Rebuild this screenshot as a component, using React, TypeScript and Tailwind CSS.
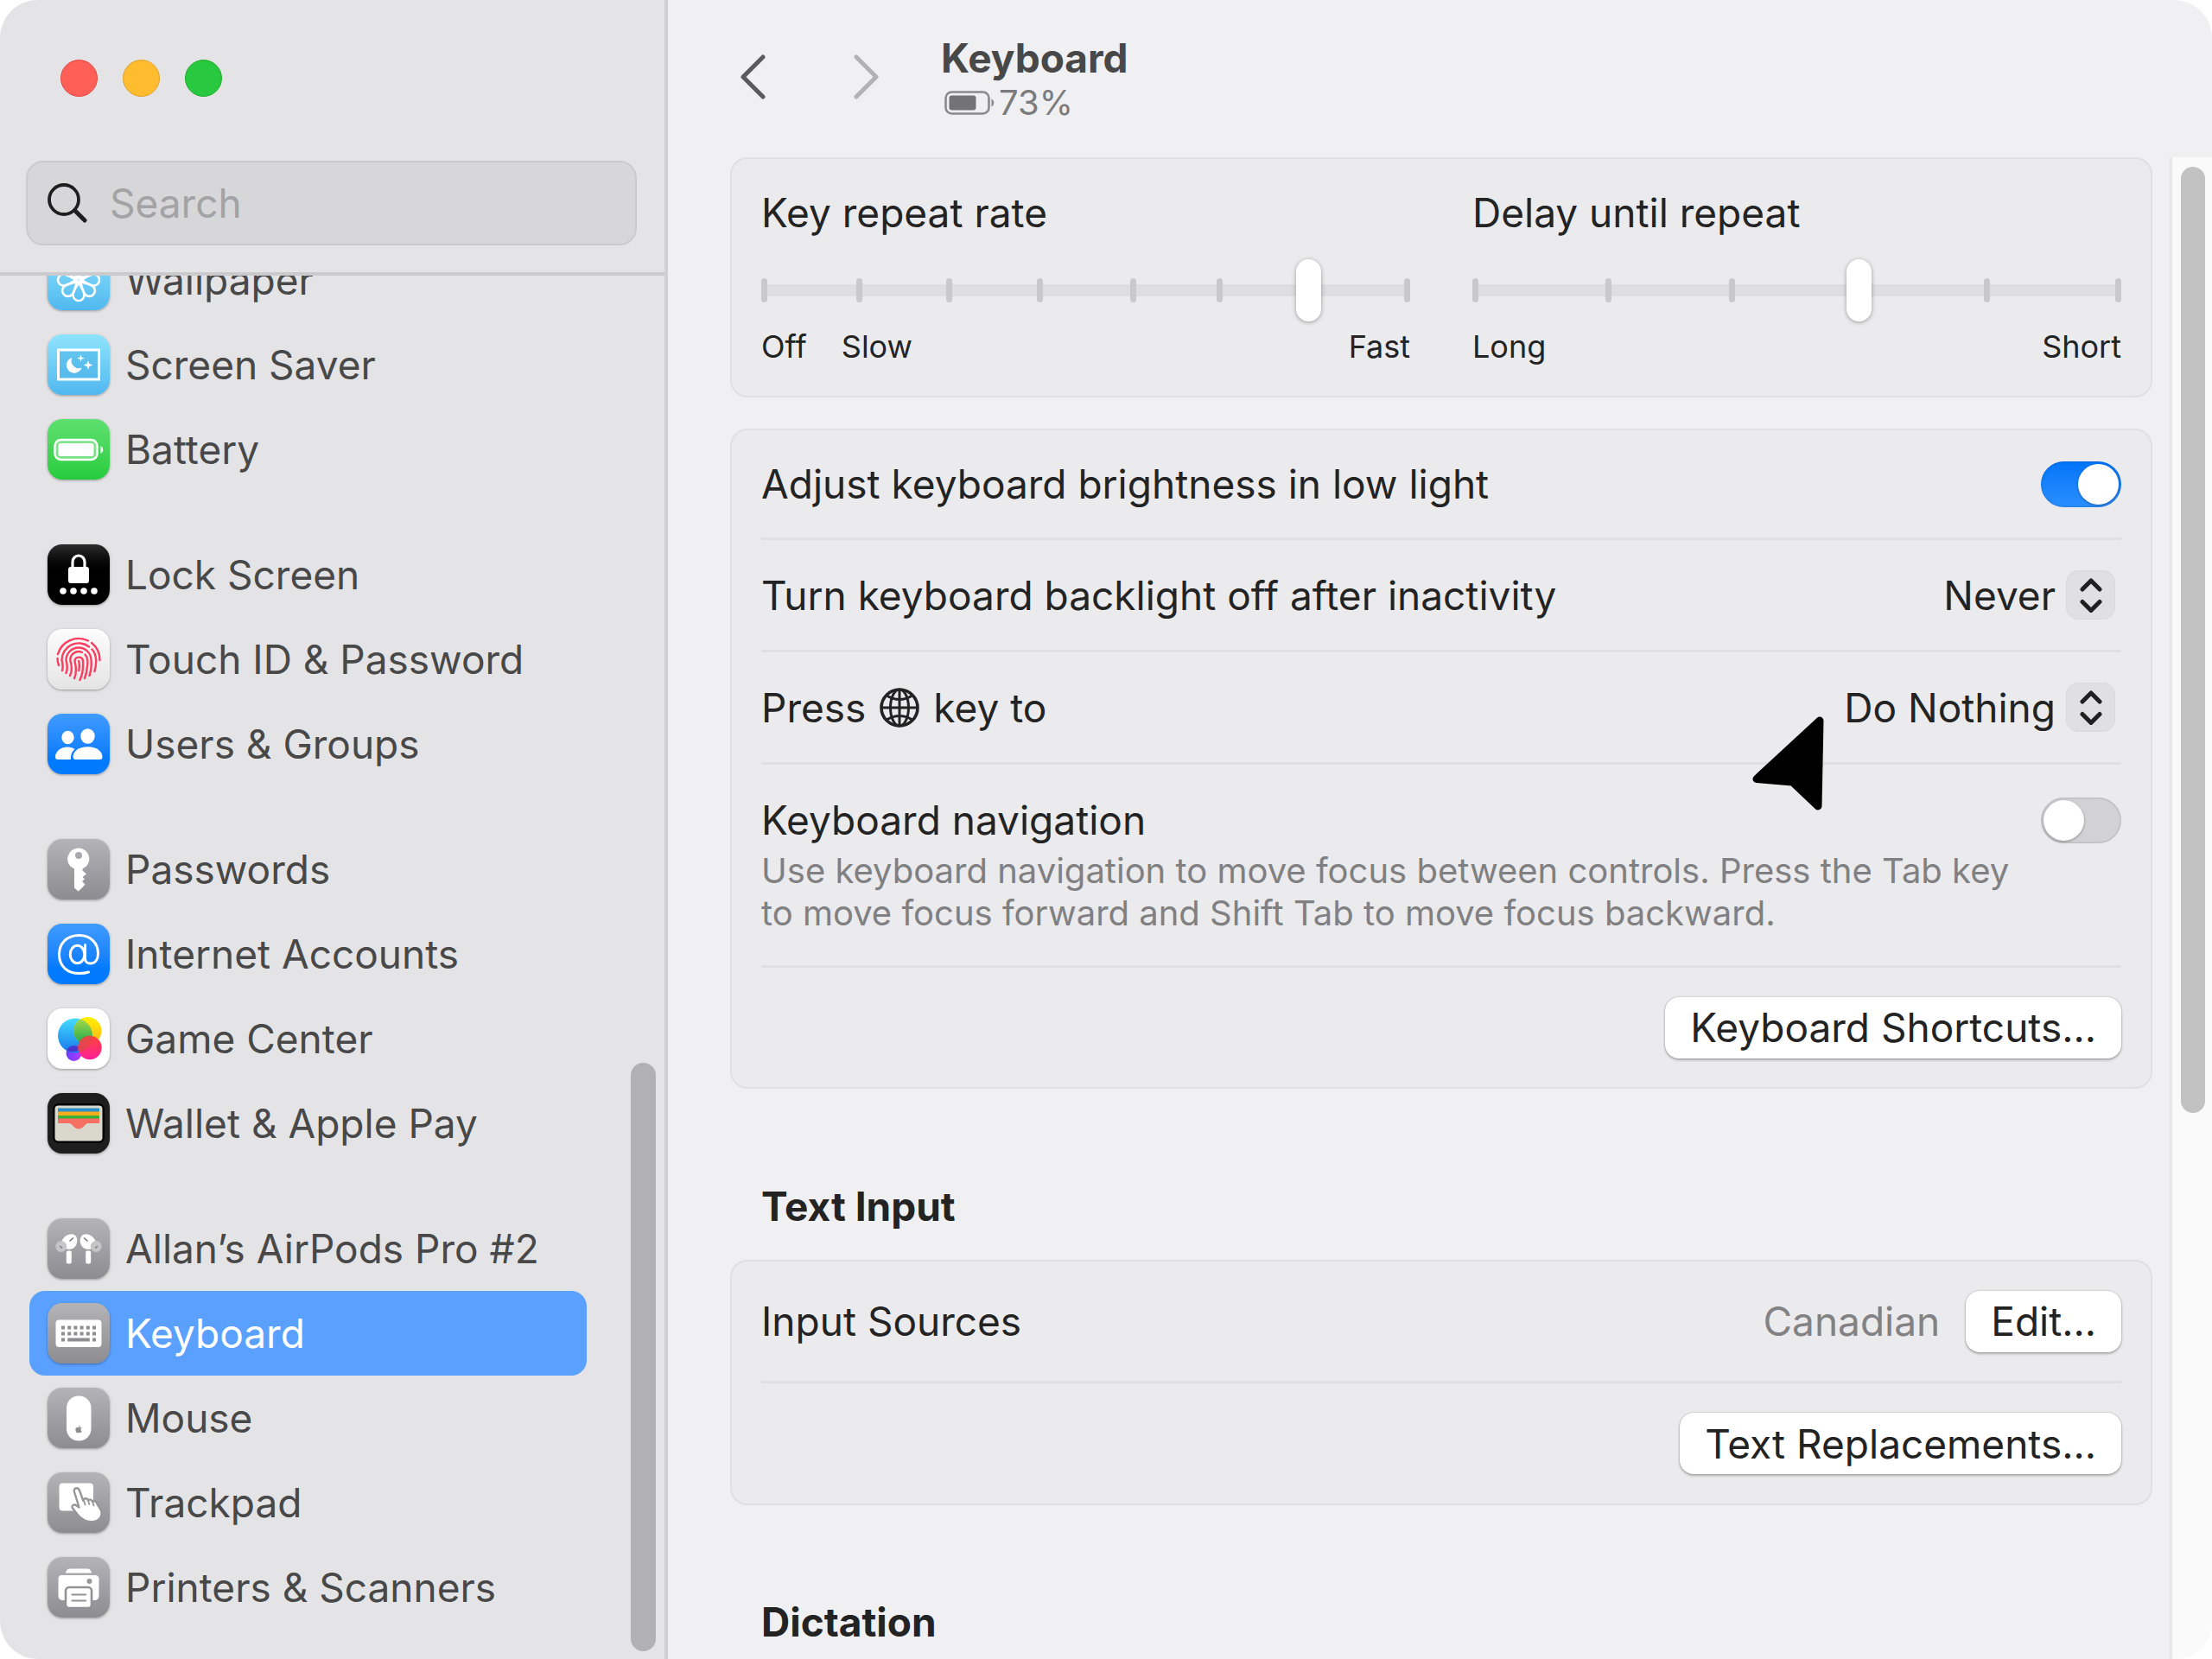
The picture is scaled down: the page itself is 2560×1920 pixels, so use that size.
import type { ReactNode } from "react";
import { FaApple } from "react-icons/fa";

const SKY = "bg-linear-to-b from-[#8ee4fd] to-[#4fb8ef]";
const GREEN = "bg-linear-to-b from-[#5ee070] to-[#24cc3c]";
const BLACK = "bg-linear-to-b from-[#2c2c2c] to-[#000000] to-55%";
const PAPER = "bg-linear-to-b from-[#fdfdfd] to-[#e4e4e4]";
const BLUE = "bg-linear-to-b from-[#3f9bff] to-[#007aff] to-75%";
const GRAY = "bg-linear-to-b from-[#b4b4b8] to-[#8c8c91]";

const WallpaperIcon = () => (
  <g fill="none" stroke="#fff" strokeWidth="2.6">
    {[0, 45, 90, 135, 180, 225, 270, 315].map((a) => (
      <path key={a} transform={`rotate(${a} 36 35)`} d="M36 38 C33 44 29.500 47 29.500 52.500 A6.500 6.500 0 0 0 42.500 52.500 C42.500 47 39 44 36 38Z" />
    ))}
    <circle cx="36" cy="35" r="4.500" />
  </g>
);

const ScreenSaverIcon = () => (
  <g>
    <rect x="12.500" y="18" width="47" height="34" fill="#4db2e6" fillOpacity=".55" stroke="#fff" strokeWidth="3" />
    <path d="M28.500 27 A9 9 0 1 0 39.500 38.500 A8.500 8.500 0 0 1 28.500 27Z" fill="#fff" />
    <path d="M38.500 23 L39.500 26.500 L43 27.500 L39.500 28.500 L38.500 32 L37.500 28.500 L34 27.500 L37.500 26.500Z M47 30 L48.300 34 L52.500 35.500 L48.300 37 L47 41 L45.700 37 L41.500 35.500 L45.700 34Z" fill="#fff" />
  </g>
);

const BatteryIcon = () => (
  <g>
    <rect x="8.500" y="24" width="49" height="23" rx="7" fill="#fff" fillOpacity=".3" stroke="#fff" strokeWidth="2.500" />
    <rect x="12.500" y="28" width="41" height="15" rx="2.500" fill="#fff" />
    <path d="M61.500 31 A5 5 0 0 1 61.500 40Z" fill="#fff" />
  </g>
);

const LockIcon = () => (
  <g fill="#fff">
    <path d="M29 28 V20.500 A7 7.500 0 0 1 43 20.500 V28" fill="none" stroke="#fff" strokeWidth="3.200" />
    <rect x="24" y="26" width="24" height="19" rx="3" />
    {[18, 30, 42, 54].map((x) => <circle key={x} cx={x} cy="54" r="3.800" />)}
  </g>
);

const TouchIcon = () => (
  <g fill="none" stroke="#fb3d60" strokeWidth="2.400" strokeLinecap="round">
    <path d="M12 29 A25 25 0 0 1 47 13.500" />
    <path d="M51 16 A25 25 0 0 1 60.500 36" />
    <path d="M11.500 34 Q11.500 38 13 42" />
    <path d="M17 48 Q18.500 43 16.500 36 A19.500 19.500 0 0 1 48 20.500" />
    <path d="M51.500 23.500 Q59 32 54.500 49" />
    <path d="M21.500 51 Q24 45 21.500 36 A14.500 14.500 0 0 1 50.500 36 Q51.500 46 48.500 54" />
    <path d="M26 54 Q29.500 47 26.500 37 A9.500 9.500 0 0 1 40 27" />
    <path d="M43.500 29.500 Q47.500 34 46 43 Q45.500 51 43 57" />
    <path d="M31 57 Q34.500 50 31.500 37 A4.800 4.800 0 0 1 41 36.500 Q42 49 37.500 59" />
    <path d="M36.300 37 Q37.500 43 36.300 48" />
  </g>
);

const UsersIcon = () => (
  <g fill="#fff">
    <ellipse cx="23.500" cy="27.500" rx="7.200" ry="7.700" />
    <ellipse cx="46.500" cy="26" rx="8.200" ry="8.800" />
    <path d="M9 50 C9 44 15 38.500 23 38.500 C27 38.500 29.500 39.500 31.500 41 C28 44 26.500 48 27 53 H12 Q9 53 9 50Z" />
    <path d="M29.500 50 C29.500 44 36 38.300 46.500 38.300 C57 38.300 63.500 44 63.500 50 Q63.500 53 60.500 53 H32.500 Q29.500 53 29.500 50Z" />
  </g>
);

const KeyIcon = () => (
  <path
    fill="#fff"
    fillRule="evenodd"
    d="M36 10.500 A12.500 12.500 0 0 0 31 34.600 V56.500 L35.500 60.500 L39 57.500 L43.500 52.500 L40 49 L43 46.500 L40.500 44 L45 40.500 L40.500 36.500 V34.600 A12.500 12.500 0 0 0 36 10.500Z M36 15 A4 4 0 1 1 36 23 A4 4 0 1 1 36 15Z"
  />
);

const AtIcon = () => (
  <g fill="none" stroke="#fff" strokeWidth="3" strokeLinecap="round">
    <ellipse cx="34.500" cy="35.500" rx="8.300" ry="10.300" />
    <path d="M43.500 24.500 V40.500 C43.500 44 46 46 49.500 46 C55.500 46 58.500 41 58.500 34.500 C58.500 22 49.500 13.500 36.500 13.500 C22.500 13.500 13.500 22.500 13.500 35.500 C13.500 49 22.500 57.500 37 57.500 C41 57.500 44.500 57 47.500 56" />
  </g>
);

const GameIcon = () => (
  <g>
    <defs>
      <linearGradient id="gc-blue" x1="0" y1="0" x2="0" y2="1"><stop offset="0" stopColor="#45dcff" /><stop offset="1" stopColor="#1577ea" /></linearGradient>
      <linearGradient id="gc-yellow" x1="0" y1="0" x2="0" y2="1"><stop offset="0" stopColor="#fff100" /><stop offset="1" stopColor="#ffb21c" /></linearGradient>
      <linearGradient id="gc-green" x1="0" y1="0" x2="0" y2="1"><stop offset="0" stopColor="#b2dc4a" /><stop offset="1" stopColor="#17a74e" /></linearGradient>
      <linearGradient id="gc-red" x1="0" y1="0" x2="0" y2="1"><stop offset="0" stopColor="#ff4436" /><stop offset="1" stopColor="#ff1f9c" /></linearGradient>
      <linearGradient id="gc-purple" x1="0" y1="0" x2="1" y2="0"><stop offset="0" stopColor="#6a3dff" /><stop offset="1" stopColor="#b53cff" /></linearGradient>
      <clipPath id="gc-clip"><circle cx="32" cy="31.500" r="20" /></clipPath>
    </defs>
    <circle cx="30.500" cy="52" r="9" fill="url(#gc-purple)" />
    <circle cx="32" cy="31.500" r="20" fill="url(#gc-blue)" />
    <path d="M22 49 A9 9 0 0 1 38 47.500 A20 20 0 0 1 22 49Z" fill="#4a35cf" />
    <circle cx="46.500" cy="26" r="16" fill="url(#gc-yellow)" />
    <circle cx="46.500" cy="26" r="16" fill="url(#gc-green)" clipPath="url(#gc-clip)" />
    <circle cx="49" cy="45.500" r="13.700" fill="url(#gc-red)" />
    <circle cx="49" cy="45.500" r="13.700" fill="#dd4a4a" fillOpacity=".75" clipPath="url(#gc-clip)" />
  </g>
);

const WalletIcon = () => (
  <g>
    <rect x="6" y="12" width="60" height="46" rx="7" fill="#000" />
    <rect x="8.500" y="14.500" width="55" height="41" rx="4" fill="#dad7cd" />
    <path d="M12 17.500 H60 V22 H12Z" fill="#2a92c9" />
    <path d="M12 21.500 H60 V26 H12Z" fill="#f8ae1c" />
    <path d="M12 26 H60 V30 H12Z" fill="#3bb136" />
    <path d="M12 29.500 H60 V35 H47 C43 35 42 41.500 36 41.500 C30 41.500 29 35 25 35 H12Z" fill="#f56f62" />
  </g>
);

const Pod = () => (
  <g>
    <path d="M16 28 C18 20 26 16.500 31 19 C36 22 35 31 30 34.500 C27 36.500 21 36.500 18 33Z" fill="#fff" />
    <rect x="21.800" y="37.500" width="6" height="15" rx="1.800" fill="#fff" />
    <circle cx="15.800" cy="32.500" r="6.500" fill="#c6c6c8" />
    <path d="M14 32 L17 34.500" stroke="#8f8f93" strokeWidth="2" />
    <path d="M25.500 26.500 L30 22.500" stroke="#77777b" strokeWidth="1.500" />
  </g>
);

const AirPodsIcon = () => (
  <g>
    <Pod />
    <g transform="translate(72 0) scale(-1 1)"><Pod /></g>
  </g>
);

const KeyboardIcon = () => (
  <g>
    <rect x="9.500" y="19.500" width="53" height="31.500" rx="4" fill="#fff" />
    <g fill="#8e8e92">
      {[16, 23.200, 30.400, 37.600, 44.800, 52].map((x) => (
        <g key={x}>
          <rect x={x} y="26.500" width="4" height="4" />
          <rect x={x} y="33.500" width="4" height="4" />
        </g>
      ))}
      <rect x="16" y="40.500" width="4" height="4" />
      <rect x="23.200" y="40.500" width="25.600" height="4" />
      <rect x="52" y="40.500" width="4" height="4" />
    </g>
  </g>
);

const MouseIcon = () => (
  <g>
    <rect x="22" y="9.500" width="28.500" height="52" rx="14" fill="#fff" />
    <FaApple x="31" y="43" size={10} color="#8e8e92" />
  </g>
);

const TrackpadIcon = () => (
  <g>
    <rect x="13.500" y="12.500" width="39.500" height="32" rx="4" fill="#fff" />
    <path
      d="M31 22.500 C29.500 18.500 35 16.500 36.800 20.500 L41.500 33 C42 29.500 46 29.500 46.800 32.500 C48.500 30.500 51.500 31.500 52 34 C54 32.500 56.500 33.500 57.500 36.500 L61.500 43 C64.500 49 61 56 53.500 57 C45 58 39.500 55 34.500 48.500 L29 41.500 C27 38.500 31 36 33.500 38.500 L36.500 40.500Z"
      fill="#fff"
      stroke="#97979b"
      strokeWidth="2.400"
      strokeLinejoin="round"
    />
    <path d="M42.200 33 L43.500 37.500 M47.200 33 L48.300 37 M52.500 35 L53.500 38.500" stroke="#97979b" strokeWidth="1.800" strokeLinecap="round" />
  </g>
);

const PrinterIcon = () => (
  <g>
    <path d="M21 18.500 Q22 13.500 26 13.500 H46 Q50 13.500 51 18.500Z" fill="#fff" />
    <path d="M16.500 21 H55 Q59.500 21 59.500 25.500 V45 Q59.500 50 54 50 H18 Q12.500 50 12.500 45 V25.500 Q12.500 21 16.500 21Z" fill="#fff" />
    <circle cx="48.500" cy="28" r="3" fill="#97979b" />
    <rect x="21" y="35" width="30" height="24" rx="4" fill="#fff" stroke="#929296" strokeWidth="2.600" />
    <path d="M28.500 43.500 H44 M28.500 50.500 H44" stroke="#929296" strokeWidth="2.200" strokeLinecap="round" />
  </g>
);

type Item = { label: string; tile: string; Icon: () => ReactNode; current?: boolean };

const groups: Item[][] = [
  [
    { label: "Wallpaper", tile: SKY, Icon: WallpaperIcon },
    { label: "Screen Saver", tile: SKY, Icon: ScreenSaverIcon },
    { label: "Battery", tile: GREEN, Icon: BatteryIcon },
  ],
  [
    { label: "Lock Screen", tile: BLACK, Icon: LockIcon },
    { label: "Touch ID & Password", tile: PAPER, Icon: TouchIcon },
    { label: "Users & Groups", tile: BLUE, Icon: UsersIcon },
  ],
  [
    { label: "Passwords", tile: GRAY, Icon: KeyIcon },
    { label: "Internet Accounts", tile: BLUE, Icon: AtIcon },
    { label: "Game Center", tile: "bg-white", Icon: GameIcon },
    { label: "Wallet & Apple Pay", tile: "bg-[#1e1e1e]", Icon: WalletIcon },
  ],
  [
    { label: "Allan’s AirPods Pro #2", tile: GRAY, Icon: AirPodsIcon },
    { label: "Keyboard", tile: GRAY, Icon: KeyboardIcon, current: true },
    { label: "Mouse", tile: GRAY, Icon: MouseIcon },
    { label: "Trackpad", tile: GRAY, Icon: TrackpadIcon },
    { label: "Printers & Scanners", tile: GRAY, Icon: PrinterIcon },
  ],
];

function SidebarItem({ label, tile, Icon, current }: Item) {
  return (
    <li>
      <a
        href="#"
        aria-current={current ? "page" : undefined}
        className={`flex h-[98px] items-center gap-[18px] rounded-[18px] pl-[21px] ${current ? "bg-[#5aa1ff] text-white" : "text-[#484849]"}`}
      >
        <span className={`h-[70px] w-[72px] shrink-0 overflow-hidden rounded-[17px] shadow-[0_1px_3px_rgba(0,0,0,0.35)] ${tile}`}>
          <svg viewBox="0 0 72 70" className="h-full w-full" aria-hidden="true"><Icon /></svg>
        </span>
        <span className="whitespace-nowrap">{label}</span>
      </a>
    </li>
  );
}

function Sidebar() {
  return (
    <aside className="flex w-[773px] shrink-0 flex-col border-r-4 border-[#d0d0d2] bg-[#e4e4e6]">
      <div className="border-b-4 border-[#cbcbcd] pb-[31px] pl-[30px] pr-8">
        <div className="flex gap-[29px] pb-[74px] pl-10 pt-[69px]">
          <button aria-label="Close" className="size-[43px] rounded-full border border-[#e2463f] bg-[#ff5f57]" />
          <button aria-label="Minimize" className="size-[43px] rounded-full border border-[#e0a028] bg-[#febc2e]" />
          <button aria-label="Zoom" className="size-[43px] rounded-full border border-[#1dad2b] bg-[#28c840]" />
        </div>
        <label className="flex h-[98px] items-center gap-[26px] rounded-[20px] border-2 border-[#cbcbcd] bg-[#d7d7d9] pl-[23px]">
          <svg viewBox="0 0 46 46" className="size-[46px] shrink-0" fill="none" stroke="#1f1f1f" strokeLinecap="round" aria-hidden="true">
            <circle cx="19" cy="19" r="17" strokeWidth="3.800" />
            <path d="M31.500 31.500 L43 43" strokeWidth="5" />
          </svg>
          <input type="search" aria-label="Search" placeholder="Search" className="w-full min-w-0 bg-transparent outline-none placeholder:text-[#a3a3a5]" />
        </label>
      </div>
      <div className="flex min-h-0 flex-1">
        <nav className="min-w-0 flex-1 overflow-hidden pl-[34px]">
          <div className="-mt-11 flex flex-col gap-[47px]">
            {groups.map((g, i) => (
              <ul key={i}>{g.map((it) => <SidebarItem key={it.label} {...it} />)}</ul>
            ))}
          </div>
        </nav>
        <div className="flex w-[90px] flex-col justify-end pb-[9px] pl-[51px]">
          <div className="h-[42.8%] w-[29px] rounded-full bg-[#b1b1b4]" />
        </div>
      </div>
    </aside>
  );
}

function Panel({ children }: { children: ReactNode }) {
  return <section className="rounded-[20px] border-2 border-[#e0e0e2] bg-[#ebebed] px-[34px]">{children}</section>;
}

type SliderProps = { id: string; label: string; max: number; value: number; ticks: number[]; children: ReactNode };

function Slider({ id, label, max, value, ticks, children }: SliderProps) {
  return (
    <div className="min-w-0 flex-1">
      <label htmlFor={id}>{label}</label>
      <div className="relative mt-[26px] flex h-[72px] items-center">
        <div className="h-[14px] w-full rounded-xs bg-[#dedee0]" />
        {ticks.map((t) => (
          <span key={t} className="absolute h-7 w-[7px] rounded-full bg-[#c9c9cb]" style={{ left: `${t}%` }} />
        ))}
        <input
          id={id}
          type="range"
          min={0}
          max={max}
          defaultValue={value}
          className="absolute inset-0 h-full w-full appearance-none bg-transparent [&::-webkit-slider-thumb]:h-[72px] [&::-webkit-slider-thumb]:w-[29px] [&::-webkit-slider-thumb]:appearance-none [&::-webkit-slider-thumb]:rounded-full [&::-webkit-slider-thumb]:bg-white [&::-webkit-slider-thumb]:shadow-[0_1px_5px_rgba(0,0,0,0.35)]"
        />
      </div>
      <div className="mt-[5px] flex text-[36px] leading-[48px]">{children}</div>
    </div>
  );
}

function Toggle({ id, on }: { id: string; on?: boolean }) {
  return (
    <span className="relative flex h-[53px] w-[93px] shrink-0">
      <input
        id={id}
        type="checkbox"
        role="switch"
        defaultChecked={on}
        className="peer h-full w-full appearance-none rounded-full bg-[#d2d2d4] shadow-[inset_0_0_3px_rgba(0,0,0,0.25)] checked:bg-linear-to-b checked:from-[#0074f8] checked:to-[#2a90ff]"
      />
      <span className="pointer-events-none absolute left-[3px] top-[3px] size-[47px] rounded-full bg-white shadow-[0_1px_3px_rgba(0,0,0,0.35)] peer-checked:left-auto peer-checked:right-[3px]" />
    </span>
  );
}

function Picker({ id, options }: { id: string; options: string[] }) {
  return (
    <span className="relative mr-[7px] flex items-center">
      <select id={id} className="appearance-none bg-transparent pr-[69px] text-right outline-none [field-sizing:content]">
        {options.map((o) => <option key={o}>{o}</option>)}
      </select>
      <span className="pointer-events-none absolute right-0 flex size-[57px] items-center justify-center rounded-[14px] border border-[#d9d9db] bg-[#e0e0e2]">
        <svg viewBox="0 0 26 40" className="h-10 w-[26px]" fill="none" stroke="#202020" strokeWidth="5" strokeLinecap="round" strokeLinejoin="round" aria-hidden="true">
          <path d="M3 13 L13 3 L23 13 M3 27.500 L13 37.500 L23 27.500" />
        </svg>
      </span>
    </span>
  );
}

function PushButton({ children }: { children: ReactNode }) {
  return (
    <button className="h-[71px] whitespace-nowrap rounded-[16px] bg-white px-[29px] shadow-[0_0_2px_rgba(0,0,0,0.3),0_2px_3px_rgba(0,0,0,0.25)]">
      {children}
    </button>
  );
}

const rowLine = "border-b-3 border-[#e0e0e2]";

const Globe = () => (
  <svg viewBox="0 0 46 46" className="size-[46px]" fill="none" stroke="#232323" strokeWidth="3" aria-hidden="true">
    <circle cx="23" cy="23" r="21" strokeWidth="3.600" />
    <ellipse cx="23" cy="23" rx="10.500" ry="21" />
    <path d="M23 2 V44 M2 23 H44 M8 9 Q23 18 38 9 M8 37 Q23 28 38 37" />
  </svg>
);

export default function App() {
  return (
    <div className="bg-white">
      <div className="relative flex h-screen min-w-0 overflow-hidden rounded-[44px] bg-[#f0f0f2] font-['Inter','Liberation_Sans',sans-serif] text-[46px] leading-[56px] text-[#232323]">
        <Sidebar />
        <main className="flex min-w-0 flex-1 flex-col">
          <header className="flex h-[182px] shrink-0 items-start pl-[83px]">
            <button aria-label="Back" className="mt-[63px]">
              <svg viewBox="0 0 32 52" className="h-[52px] w-8" fill="none" stroke="#5a5a5c" strokeWidth="5" strokeLinecap="round" strokeLinejoin="round"><path d="M27 3 L4 26 L27 49" /></svg>
            </button>
            <button aria-label="Forward" className="ml-[98px] mt-[63px]">
              <svg viewBox="0 0 32 52" className="h-[52px] w-8" fill="none" stroke="#b2b2b4" strokeWidth="5" strokeLinecap="round" strokeLinejoin="round"><path d="M5 3 L28 26 L5 49" /></svg>
            </button>
            <div className="ml-[71px] pt-[39px]">
              <h1 className="font-bold text-[#484849]">Keyboard</h1>
              <p className="flex items-center gap-[3px] pl-1 text-[40px] leading-[48px] text-[#7b7b7d]">
                <svg viewBox="0 0 60 28" className="h-7 w-[60px]" aria-hidden="true">
                  <rect x="1.500" y="1.500" width="50" height="25" rx="7" fill="none" stroke="#8a8a8c" strokeWidth="2.600" />
                  <rect x="5.500" y="5.500" width="31" height="17" rx="3" fill="#737375" />
                  <path d="M54.500 9.500 A5 5 0 0 1 54.500 18.500Z" fill="#8a8a8c" />
                </svg>
                73%
              </p>
            </div>
          </header>
          <div className="flex min-h-0 flex-1">
            <div className="min-w-0 flex-1 overflow-hidden pl-[72px] pr-5">
              <Panel>
                <div className="flex gap-[72px] pb-[33px] pt-[34px]">
                  <Slider id="rate" label="Key repeat rate" max={7} value={6} ticks={[0, 14.700, 28.500, 42.500, 56.800, 70.200, 99.100]}>
                    <span>Off</span>
                    <span className="ml-10">Slow</span>
                    <span className="ml-auto">Fast</span>
                  </Slider>
                  <Slider id="delay" label="Delay until repeat" max={5} value={3} ticks={[0, 20.500, 39.600, 78.800, 99.100]}>
                    <span>Long</span>
                    <span className="ml-auto">Short</span>
                  </Slider>
                </div>
              </Panel>
              <div className="h-9" />
              <Panel>
                <div className={`flex h-[127px] items-center justify-between ${rowLine}`}>
                  <label htmlFor="brightness">Adjust keyboard brightness in low light</label>
                  <Toggle id="brightness" on />
                </div>
                <div className={`flex h-[130px] items-center justify-between ${rowLine}`}>
                  <label htmlFor="backlight">Turn keyboard backlight off after inactivity</label>
                  <Picker id="backlight" options={["Never"]} />
                </div>
                <div className={`flex h-[130px] items-center justify-between ${rowLine}`}>
                  <label htmlFor="globe" className="flex items-center gap-4">Press <Globe /> key to</label>
                  <Picker id="globe" options={["Do Nothing"]} />
                </div>
                <div className={`pb-9 pt-9 ${rowLine}`}>
                  <div className="flex items-center justify-between">
                    <label htmlFor="navigation">Keyboard navigation</label>
                    <Toggle id="navigation" />
                  </div>
                  <p className="mt-[6px] max-w-[1456px] text-[40px] leading-[49px] text-[#808082]">
                    Use keyboard navigation to move focus between controls. Press the Tab key to move focus forward and Shift Tab to move focus backward.
                  </p>
                </div>
                <div className="flex h-[138px] items-center justify-end">
                  <PushButton>Keyboard Shortcuts…</PushButton>
                </div>
              </Panel>
              <h2 className="pb-[34px] pl-9 pt-[108px] font-bold">Text Input</h2>
              <Panel>
                <div className={`flex h-[141px] items-center ${rowLine}`}>
                  <span>Input Sources</span>
                  <span className="ml-auto mr-[30px] text-[#828284]">Canadian</span>
                  <PushButton>Edit…</PushButton>
                </div>
                <div className="flex h-[139px] items-center justify-end">
                  <PushButton>Text Replacements…</PushButton>
                </div>
              </Panel>
              <h2 className="pl-9 pt-[107px] font-bold">Dictation</h2>
            </div>
            <div className="w-[49px] shrink-0 border-l-3 border-[#e8e8e9] bg-[#fafafa] pl-[10px] pt-[11px]">
              <div className="h-[63.4%] w-7 rounded-full bg-[#c2c2c2]" />
            </div>
          </div>
        </main>
        <svg viewBox="0 0 84 110" className="absolute left-[2028px] top-[829px] h-[110px] w-[84px]" aria-hidden="true">
          <path d="M78 5 L5 72.500 L46.500 76 L76 104Z" fill="#000" stroke="#000" strokeWidth="9" strokeLinejoin="round" />
        </svg>
      </div>
    </div>
  );
}
